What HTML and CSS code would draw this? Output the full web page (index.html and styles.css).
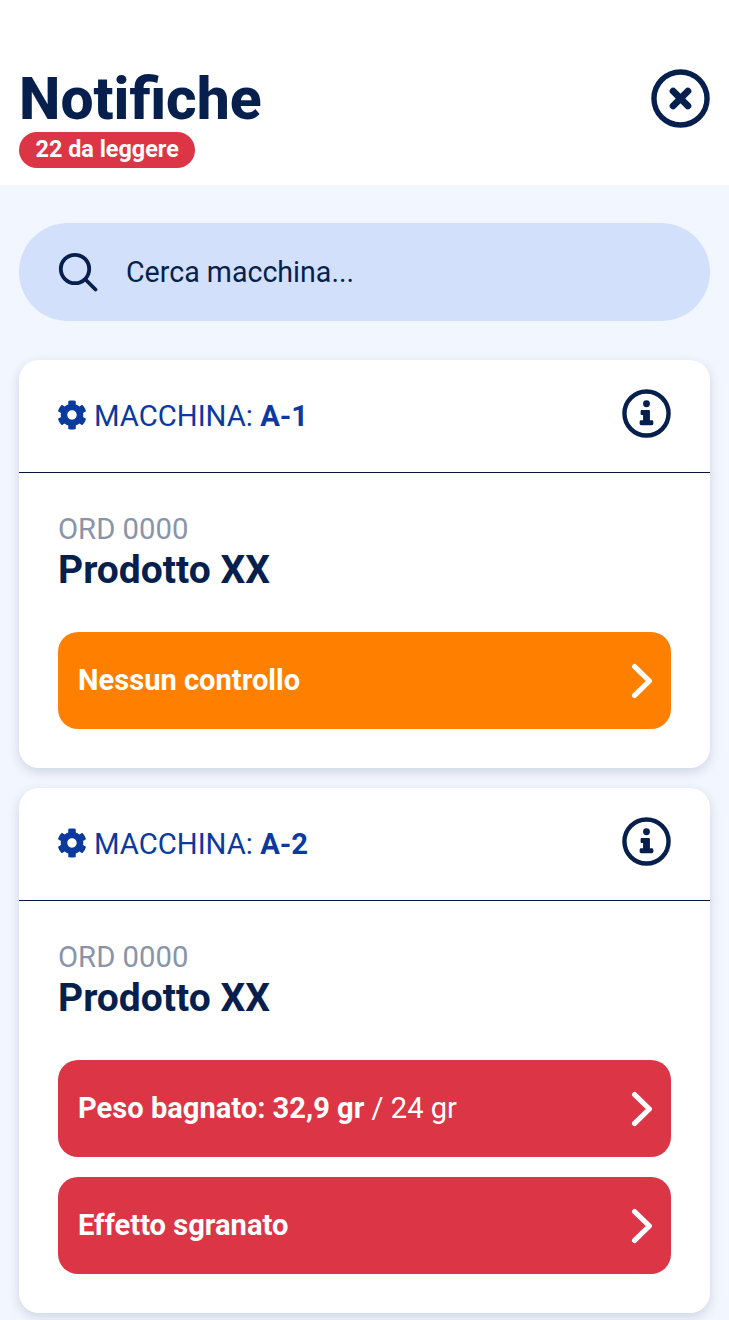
FILE: index.html
```html
<!DOCTYPE html>
<html lang="it">
<head>
<meta charset="utf-8">
<title>Notifiche</title>
<link rel="stylesheet" href="styles.css">
</head>
<body>
<header class="top">
  <div class="top-text">
    <h1 class="title">Notifiche</h1>
    <span class="badge">22 da leggere</span>
  </div>
  <svg class="close" viewBox="0 0 60 60" aria-label="Chiudi"><circle cx="30" cy="30" r="27" fill="none" stroke="#061f4c" stroke-width="5.500"/><path d="M22.500 22.500L37.500 37.500M37.500 22.500L22.500 37.500" fill="none" stroke="#061f4c" stroke-width="7" stroke-linecap="round"/></svg>
</header>
<main class="content">
  <div class="search">
    <svg class="search-icon" viewBox="0 0 40 40"><circle cx="17" cy="17" r="14.200" fill="none" stroke="#061f4c" stroke-width="3.800"/><path d="M27.500 27.500L37.500 37.500" fill="none" stroke="#061f4c" stroke-width="3.800" stroke-linecap="round"/></svg>
    <span class="search-text">Cerca macchina...</span>
  </div>
  <section class="card">
    <div class="card-head">
      <div class="machine">
        <svg class="gear" viewBox="0 0 512 512"><path fill="#0a3a9e" d="M487.4 315.7l-42.6-24.6c4.3-23.2 4.3-47 0-70.2l42.6-24.6c4.9-2.8 7.1-8.6 5.5-14-11.100-35.600-30-67.800-54.700-94.600-3.800-4.100-10-5.100-14.800-2.300L380.800 110c-17.900-15.400-38.500-27.300-60.800-35.100V25.800c0-5.600-3.900-10.500-9.400-11.700-36.700-8.200-74.300-7.800-109.200 0-5.500 1.200-9.400 6.100-9.400 11.700V75c-22.200 7.900-42.800 19.800-60.800 35.100L88.700 85.500c-4.900-2.800-11-1.900-14.800 2.300-24.700 26.700-43.600 58.900-54.700 94.600-1.700 5.400.6 11.200 5.500 14L67.300 221c-4.300 23.200-4.300 47 0 70.200l-42.600 24.600c-4.900 2.800-7.100 8.600-5.500 14 11.100 35.600 30 67.800 54.700 94.600 3.800 4.100 10 5.100 14.800 2.300l42.600-24.600c17.900 15.400 38.500 27.300 60.800 35.100v49.200c0 5.600 3.900 10.500 9.400 11.700 36.700 8.200 74.300 7.800 109.200 0 5.500-1.200 9.400-6.100 9.400-11.700v-49.200c22.200-7.900 42.800-19.800 60.800-35.100l42.600 24.600c4.900 2.800 11 1.900 14.800-2.300 24.700-26.700 43.600-58.900 54.700-94.600 1.500-5.500-.7-11.300-5.600-14.100zM256 336c-44.100 0-80-35.900-80-80s35.900-80 80-80 80 35.900 80 80-35.900 80-80 80z"/></svg>
        <span class="machine-label">MACCHINA: <b>A-1</b></span>
      </div>
      <svg class="info" viewBox="0 0 50 50"><circle cx="25" cy="25" r="22.500" fill="none" stroke="#061f4c" stroke-width="4.500"/><circle cx="25" cy="15" r="3.500" fill="#061f4c"/><path fill="#061f4c" d="M20 21.500h7.500a1 1 0 0 1 1 1V32h2a1.500 1.500 0 0 1 1.500 1.500v2a1.500 1.500 0 0 1-1.500 1.500h-11a1.500 1.500 0 0 1-1.500-1.500v-2a1.500 1.500 0 0 1 1.500-1.500h2v-5.500h-1.500a1 1 0 0 1-1-1v-3a1 1 0 0 1 1-1z"/></svg>
    </div>
    <div class="card-body">
      <div class="order">ORD 0000</div>
      <div class="product">Prodotto XX</div>
      <div class="actions">
        <a class="action orange"><span>Nessun controllo</span><svg class="chev" viewBox="0 0 24 38"><path d="M6.600 4.600L21.400 19L6.600 33.400" fill="none" stroke="#fff" stroke-width="5.200" stroke-linecap="round" stroke-linejoin="round"/></svg></a>
      </div>
    </div>
  </section>
  <section class="card">
    <div class="card-head">
      <div class="machine">
        <svg class="gear" viewBox="0 0 512 512"><path fill="#0a3a9e" d="M487.4 315.7l-42.6-24.6c4.3-23.2 4.3-47 0-70.2l42.6-24.6c4.9-2.8 7.1-8.6 5.5-14-11.100-35.600-30-67.800-54.700-94.600-3.800-4.100-10-5.100-14.800-2.300L380.800 110c-17.900-15.400-38.500-27.300-60.800-35.100V25.800c0-5.600-3.900-10.500-9.400-11.700-36.700-8.200-74.300-7.800-109.200 0-5.500 1.200-9.400 6.100-9.400 11.700V75c-22.200 7.900-42.800 19.800-60.800 35.100L88.700 85.500c-4.900-2.800-11-1.900-14.800 2.300-24.700 26.700-43.600 58.900-54.700 94.600-1.700 5.400.6 11.200 5.500 14L67.300 221c-4.300 23.200-4.300 47 0 70.200l-42.600 24.600c-4.900 2.800-7.100 8.600-5.500 14 11.100 35.600 30 67.800 54.700 94.600 3.800 4.100 10 5.100 14.800 2.300l42.600-24.600c17.900 15.400 38.500 27.300 60.800 35.100v49.200c0 5.600 3.900 10.500 9.400 11.700 36.700 8.200 74.300 7.800 109.200 0 5.500-1.200 9.400-6.100 9.400-11.700v-49.200c22.200-7.900 42.800-19.800 60.800-35.100l42.600 24.600c4.900 2.800 11 1.900 14.800-2.300 24.700-26.700 43.600-58.900 54.700-94.600 1.500-5.500-.7-11.300-5.600-14.100zM256 336c-44.100 0-80-35.900-80-80s35.900-80 80-80 80 35.900 80 80-35.900 80-80 80z"/></svg>
        <span class="machine-label">MACCHINA: <b>A-2</b></span>
      </div>
      <svg class="info" viewBox="0 0 50 50"><circle cx="25" cy="25" r="22.500" fill="none" stroke="#061f4c" stroke-width="4.500"/><circle cx="25" cy="15" r="3.500" fill="#061f4c"/><path fill="#061f4c" d="M20 21.500h7.500a1 1 0 0 1 1 1V32h2a1.500 1.500 0 0 1 1.500 1.500v2a1.500 1.500 0 0 1-1.500 1.500h-11a1.500 1.500 0 0 1-1.500-1.500v-2a1.500 1.500 0 0 1 1.500-1.500h2v-5.500h-1.500a1 1 0 0 1-1-1v-3a1 1 0 0 1 1-1z"/></svg>
    </div>
    <div class="card-body">
      <div class="order">ORD 0000</div>
      <div class="product">Prodotto XX</div>
      <div class="actions">
        <a class="action red"><span>Peso bagnato: 32,9 gr <em class="ref">/ 24 gr</em></span><svg class="chev" viewBox="0 0 24 38"><path d="M6.600 4.600L21.400 19L6.600 33.400" fill="none" stroke="#fff" stroke-width="5.200" stroke-linecap="round" stroke-linejoin="round"/></svg></a>
        <a class="action red"><span>Effetto sgranato</span><svg class="chev" viewBox="0 0 24 38"><path d="M6.600 4.600L21.400 19L6.600 33.400" fill="none" stroke="#fff" stroke-width="5.200" stroke-linecap="round" stroke-linejoin="round"/></svg></a>
      </div>
    </div>
  </section>
</main>
</body>
</html>
```
FILE: styles.css
```css
* { box-sizing: border-box; }
html, body { margin: 0; padding: 0; }
body {
  font-family: Roboto, "Liberation Sans", sans-serif;
  background: #f2f6fe;
  color: #061f4c;
  height: 1320px;
  overflow: hidden;
}
.top {
  height: 185px;
  background: #fff;
  padding: 69px 19px 0;
  display: flex;
  justify-content: space-between;
  align-items: flex-start;
}
.top-text { display: flex; flex-direction: column; align-items: flex-start; }
.title {
  margin: 0;
  font-size: 58.800px;
  line-height: 60px;
  font-weight: 800;
  color: #061f4c;
}
.badge {
  margin-top: 3px;
  height: 36px;
  padding: 0 16.500px;
  border-radius: 18px;
  background: #dc3545;
  color: #fff;
  font-size: 23.400px;
  font-weight: 700;
  line-height: 35px;
}
.close { width: 59px; height: 59px; }
.content {
  padding: 38px 19px 0;
  display: flex;
  flex-direction: column;
}
.search {
  height: 98px;
  border-radius: 49px;
  background: #d2e0fb;
  display: flex;
  align-items: center;
  padding-left: 39px;
  gap: 28px;
  margin-bottom: 39px;
}
.search-icon { width: 40px; height: 40px; }
.search-text { font-size: 28.600px; color: #061f4c; }
.card {
  background: #fff;
  border-radius: 20px;
  box-shadow: 0 4px 12px rgba(20, 40, 90, 0.16);
  margin-bottom: 20px;
}
.card-head {
  height: 113px;
  border-bottom: 1px solid #04173f;
  padding: 0 39px;
  display: flex;
  justify-content: space-between;
  align-items: center;
}
.machine { display: flex; align-items: center; gap: 7px; }
.gear { width: 30px; height: 30px; margin-left: -1px; margin-top: -2px; }
.machine-label { font-size: 29.250px; color: #0a3a9e; }
.machine-label b { font-weight: 700; }
.info { width: 49px; height: 49px; margin-top: -5px; }
.card-body { padding: 39px 39px 39px; }
.order { font-size: 29.250px; line-height: 35px; color: #8a94a8; }
.product {
  font-size: 39px;
  line-height: 46px;
  font-weight: 700;
  color: #061f4c;
}
.actions { margin-top: 39px; display: flex; flex-direction: column; gap: 20px; }
.action {
  height: 97px;
  border-radius: 20px;
  padding: 0 19px 0 20px;
  display: flex;
  justify-content: space-between;
  align-items: center;
  color: #fff;
  font-size: 29.100px;
  font-weight: 700;
}
.action span { margin-bottom: 2px; }
.orange { background: #ff8000; }
.red { background: #dc3545; }
.ref { font-style: normal; font-weight: 400; }
.chev { width: 24px; height: 38px; }
```
